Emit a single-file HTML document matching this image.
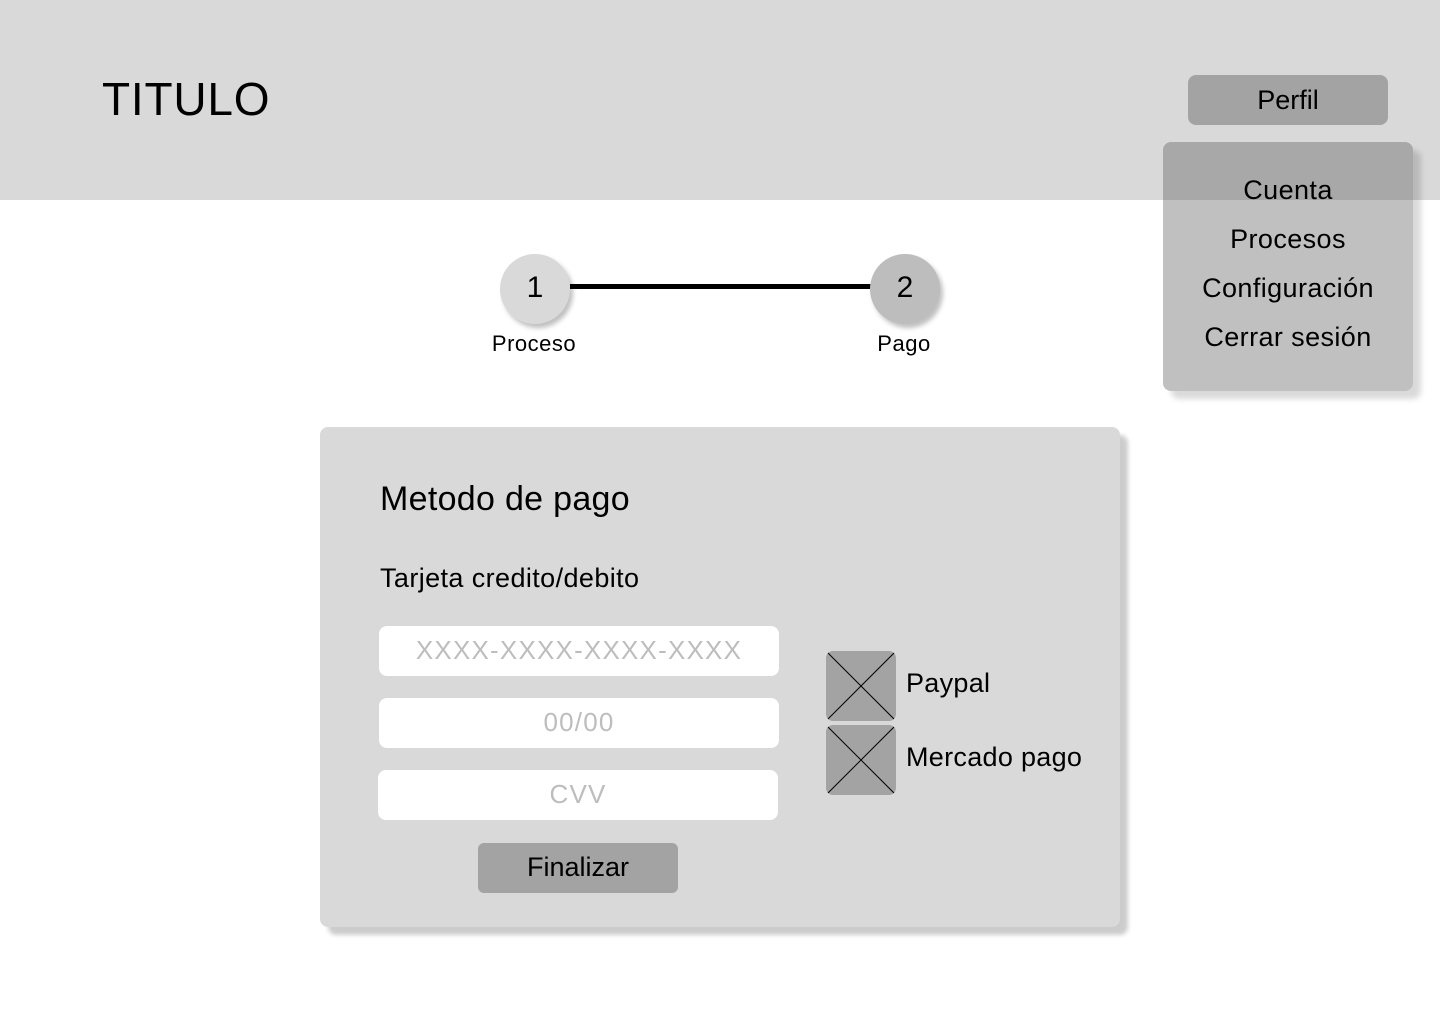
<!DOCTYPE html>
<html><head><style>
*{margin:0;padding:0;box-sizing:border-box}
body{width:1440px;height:1024px;background:#fff;font-family:"Liberation Sans",sans-serif;color:#000;position:relative;overflow:hidden}
.abs{position:absolute}
.hdr{left:0;top:0;width:1440px;height:200px;background:#d9d9d9}
.title{left:102px;top:72px;font-size:46px;letter-spacing:0.8px}
.perfil{left:1188px;top:75px;width:200px;height:50px;background:#a3a3a3;border-radius:8px;font-size:27px;text-align:center;line-height:50px}
.dd{left:1163px;top:142px;width:250px;height:249px;background:rgba(84,84,84,0.37);border-radius:8px;box-shadow:8px 8px 6px rgba(0,0,0,0.15)}
.dd div{position:absolute;left:0;width:250px;text-align:center;font-size:27px;letter-spacing:0.4px}
.circ{width:70px;height:70px;border-radius:50%;font-size:30px;text-align:center;line-height:68px;box-shadow:3px 4px 5px rgba(0,0,0,0.25)}
.lbl{font-size:22px;text-align:center;width:120px;letter-spacing:0.5px}
.card{left:320px;top:427px;width:800px;height:500px;background:#d9d9d9;border-radius:8px;box-shadow:8px 8px 4px rgba(0,0,0,0.2)}
.inp{width:400px;height:50px;background:#fff;border-radius:8px;color:#bdbdbd;font-size:26px;text-align:center;line-height:48px;letter-spacing:1.2px}
.ph{width:70px;height:70px;background:#a3a3a3;border-radius:7px;overflow:hidden}
</style></head><body>
<div class="abs hdr"></div>
<div class="abs title">TITULO</div>
<div class="abs perfil">Perfil</div>

<div class="abs" style="left:570px;top:284px;width:302px;height:5px;background:#000"></div>
<div class="abs circ" style="left:500px;top:254px;background:#d9d9d9">1</div>
<div class="abs circ" style="left:870px;top:254px;background:#bdbdbd">2</div>
<div class="abs lbl" style="left:474px;top:331px">Proceso</div>
<div class="abs lbl" style="left:844px;top:331px">Pago</div>

<div class="abs card"></div>
<div class="abs" style="left:380px;top:480px;font-size:34px;letter-spacing:0.3px">Metodo de pago</div>
<div class="abs" style="left:380px;top:563px;font-size:27px;letter-spacing:0.4px">Tarjeta credito/debito</div>
<div class="abs inp" style="left:379px;top:626px">XXXX-XXXX-XXXX-XXXX</div>
<div class="abs inp" style="left:379px;top:698px">00/00</div>
<div class="abs inp" style="left:378px;top:770px">CVV</div>
<div class="abs" style="left:478px;top:843px;width:200px;height:50px;background:#a3a3a3;border-radius:6px;font-size:27px;text-align:center;line-height:48px">Finalizar</div>

<div class="abs ph" style="left:826px;top:651px"><svg width="70" height="70"><path d="M0 0L70 70M70 0L0 70" stroke="#000" stroke-width="1"/></svg></div>
<div class="abs ph" style="left:826px;top:725px"><svg width="70" height="70"><path d="M0 0L70 70M70 0L0 70" stroke="#000" stroke-width="1"/></svg></div>
<div class="abs" style="left:906px;top:668px;font-size:27px;letter-spacing:0.3px">Paypal</div>
<div class="abs" style="left:906px;top:742px;font-size:27px;letter-spacing:0.3px">Mercado pago</div>

<div class="abs dd">
<div style="top:33px">Cuenta</div>
<div style="top:82px">Procesos</div>
<div style="top:131px">Configuración</div>
<div style="top:180px">Cerrar sesión</div>
</div>
</body></html>
